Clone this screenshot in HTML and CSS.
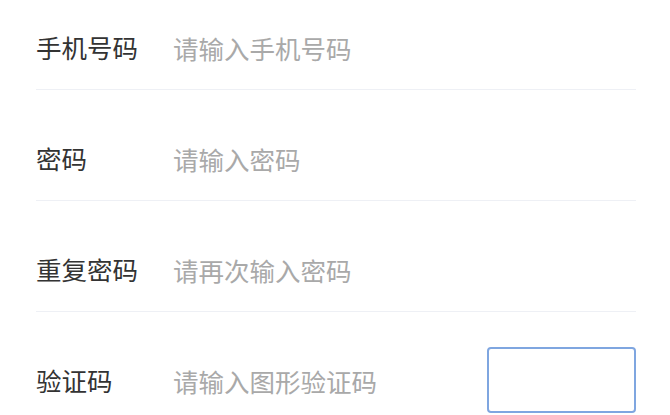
FILE: index.html
```html
<!DOCTYPE html>
<html lang="zh-CN">
<head>
<meta charset="utf-8">
<title>注册</title>
<link rel="stylesheet" href="styles.css">
</head>
<body>
<form class="form">
  <div class="row">
    <label class="label">手机号码</label>
    <input class="field" type="text" placeholder="请输入手机号码">
  </div>
  <div class="row">
    <label class="label">密码</label>
    <input class="field" type="password" placeholder="请输入密码">
  </div>
  <div class="row">
    <label class="label">重复密码</label>
    <input class="field" type="password" placeholder="请再次输入密码">
  </div>
  <div class="row row-last">
    <label class="label">验证码</label>
    <input class="field" type="text" placeholder="请输入图形验证码">
    <div class="captcha"></div>
  </div>
</form>
</body>
</html>
```
FILE: styles.css
```css
html, body {
  margin: 0;
  padding: 0;
  background: #ffffff;
  overflow: hidden;
}
body {
  font-family: "Noto Sans CJK SC", "Noto Sans", sans-serif;
}
.form {
  padding: 0 34px 0 36px;
}
.row {
  display: flex;
  align-items: center;
  box-sizing: content-box;
  height: 62px;
  padding: 37px 0 11px;
  border-bottom: 1px solid #eef0f5;
}
.row:first-child {
  padding-top: 16px;
}
.row-last {
  border-bottom: none;
}
.label {
  width: 137px;
  flex: none;
  font-size: 25.5px;
  line-height: 26px;
  color: #333333;
}
.field {
  flex: 1;
  min-width: 0;
  border: none;
  outline: none;
  padding: 0;
  margin: 0;
  font-family: inherit;
  font-size: 25.5px;
  line-height: 26px;
  color: #333333;
  background: transparent;
}
.field::placeholder {
  color: #a9a9a9;
}
.captcha {
  flex: none;
  box-sizing: border-box;
  width: 149px;
  height: 66px;
  border: 2px solid #7fa6e0;
  border-radius: 4px;
  background: #ffffff;
}
```
